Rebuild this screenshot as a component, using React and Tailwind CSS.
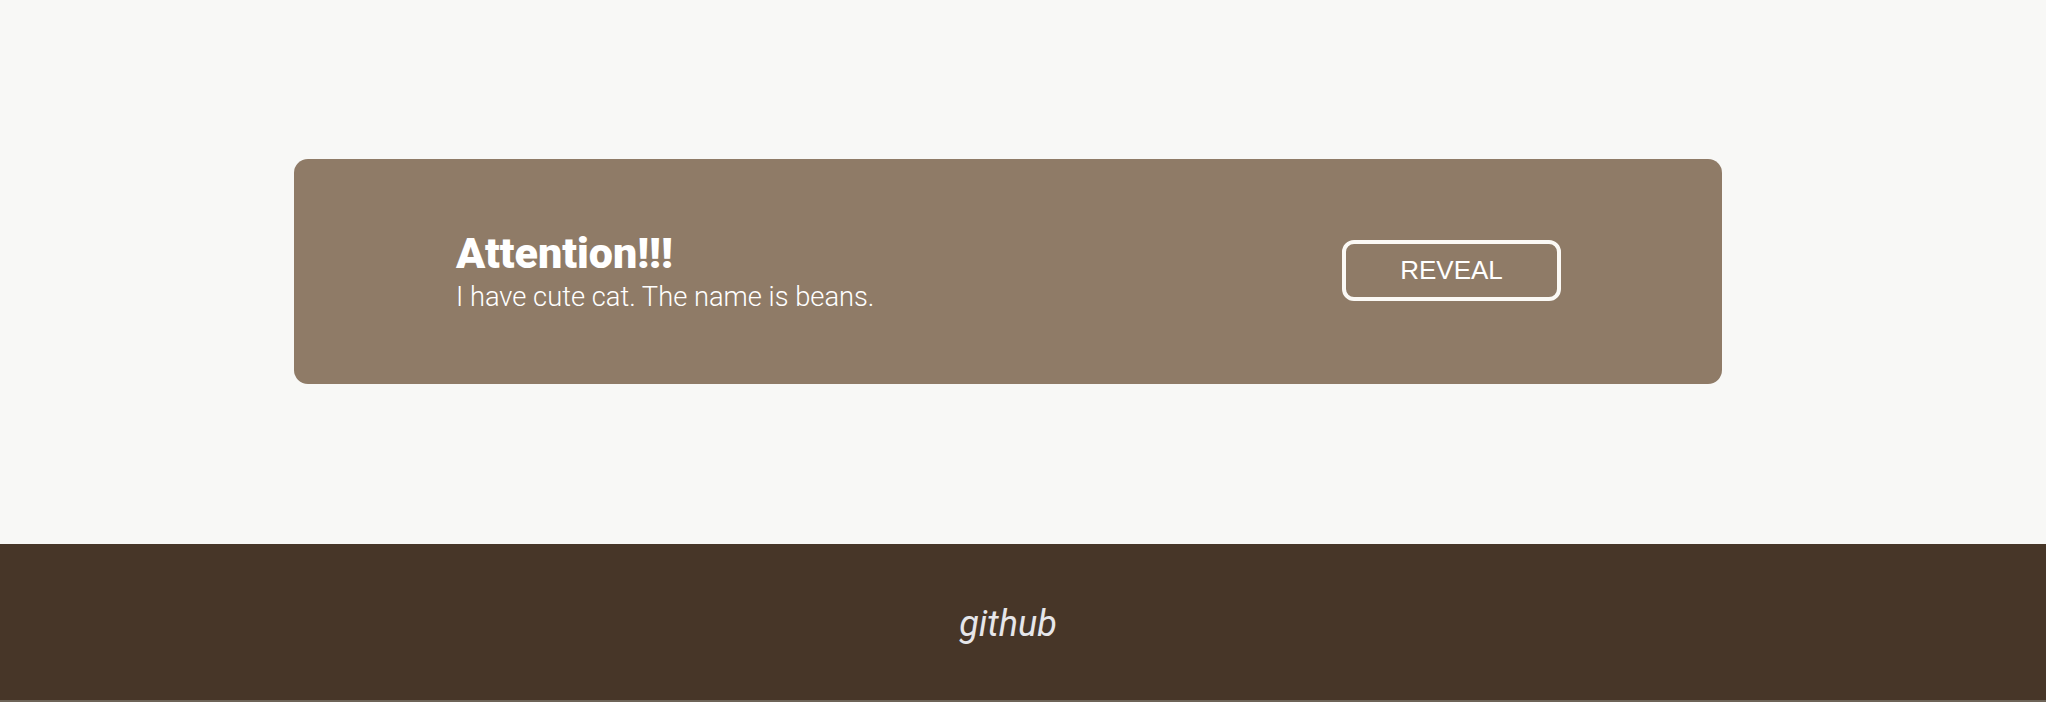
import React, { useState } from 'react';

export default function App() {
  const [revealed, setRevealed] = useState(false);

  return (
    <div className="min-h-screen bg-[#f8f8f6] font-['Roboto',sans-serif]">
      {/* Notice card */}
      <main className="h-[544px] flex items-center">
        <div className="ml-[294px] mb-[2px] w-[1428px] h-[225px] rounded-[14px] bg-[#8f7b67] pl-[162px] pr-[161px] flex items-center justify-between">
          <div className="text-white">
            <h1 className="text-[43px] leading-[46px] font-black">Attention!!!</h1>
            <p className="mt-[6px] text-[27.3px] leading-[30px] font-light">
              {revealed ? 'Beans says meow.' : 'I have cute cat. The name is beans.'}
            </p>
          </div>
          <button
            onClick={() => setRevealed(!revealed)}
            className="mb-[2px] w-[219px] h-[61px] rounded-[12px] border-4 border-[#fbf9f5] text-white text-[26px] font-['Liberation_Sans',Arial,sans-serif]"
          >
            REVEAL
          </button>
        </div>
      </main>

      {/* Footer */}
      <footer className="h-[158px] bg-[#473628] border-b-2 border-[#6e6458]">
        <div className="w-[2016px] h-full flex items-center justify-center">
          <a href="#" className="mt-[3px] text-[36px] italic text-[#e6e6ea] font-['Roboto',sans-serif]">github</a>
        </div>
      </footer>
    </div>
  );
}
